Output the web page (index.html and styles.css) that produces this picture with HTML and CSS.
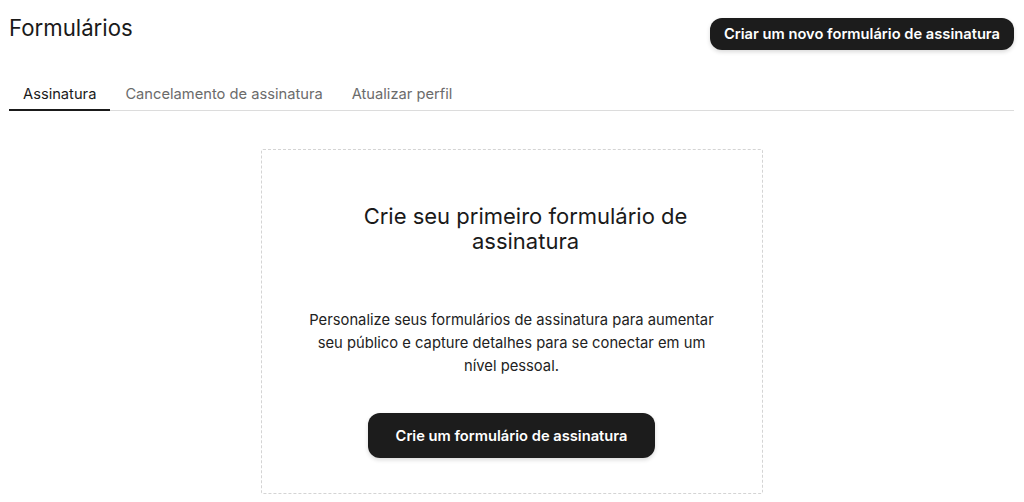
FILE: index.html
```html
<!DOCTYPE html>
<html lang="pt">
<head>
  <meta charset="UTF-8">
  <meta name="viewport" content="width=device-width, initial-scale=1.0">
  <title>Formulários</title>
  <link rel="stylesheet" href="styles.css">
</head>
<body>
  <div class="page">
    <header class="page-header">
      <h1>Formulários</h1>
      <button class="btn btn-small">Criar um novo formulário de assinatura</button>
    </header>
    <nav class="tabs">
      <a class="tab active">Assinatura</a>
      <a class="tab">Cancelamento de assinatura</a>
      <a class="tab">Atualizar perfil</a>
    </nav>
    <section class="empty-state">
      <h2>Crie seu primeiro formulário de assinatura</h2>
      <p>Personalize seus formulários de assinatura para aumentar seu público e capture detalhes para se conectar em um nível pessoal.</p>
      <button class="btn btn-large">Crie um formulário de assinatura</button>
    </section>
  </div>
</body>
</html>
```

FILE: styles.css
```css
body {
  margin: 0;
  font-family: Inter, "Noto Sans", sans-serif;
  color: #1a1a1a;
  background: #fff;
}

.page {
  padding: 0 10px 0 9px;
}

.page-header {
  display: flex;
  justify-content: space-between;
  align-items: flex-start;
  padding-top: 14px;
}

.page-header h1 {
  margin: 0;
  font-size: 22.2px;
  font-weight: 400;
  line-height: 28px;
}

.btn {
  background-color: #1c1c1c;
  color: #fff;
  border: none;
  font-family: inherit;
  font-weight: 600;
  font-size: 14.7px;
  cursor: pointer;
  box-shadow: 0 2px 4px rgba(0, 0, 0, 0.15);
}

.btn-small {
  margin-top: 4px;
  height: 32px;
  padding: 0 14px;
  border-radius: 12px;
}

.btn-large {
  height: 45px;
  width: 287px;
  border-radius: 12px;
}

.tabs {
  display: flex;
  gap: 1px;
  margin-top: 29px;
  border-bottom: 1px solid #dcdcdc;
}

.tab {
  padding: 0 14px;
  font-size: 14.7px;
  line-height: 30px;
  color: #6b6b6b;
  border-bottom: 2px solid transparent;
  margin-bottom: -1px;
}

.tab.active {
  color: #1a1a1a;
  border-bottom-color: #1a1a1a;
}

.empty-state {
  width: 502px;
  margin: 38px auto 0;
  border: 1px dashed #d4d4d4;
  border-radius: 2px;
  padding: 54px 0 35px;
  text-align: center;
  box-sizing: border-box;
}

.empty-state h2 {
  width: 340px;
  margin: 0 auto;
  padding-left: 28px;
  font-size: 22px;
  font-weight: 400;
  line-height: 25px;
}

.empty-state p {
  width: 415px;
  margin: 55px auto 35px;
  font-size: 14.75px;
  line-height: 23px;
  color: #222;
}
```
